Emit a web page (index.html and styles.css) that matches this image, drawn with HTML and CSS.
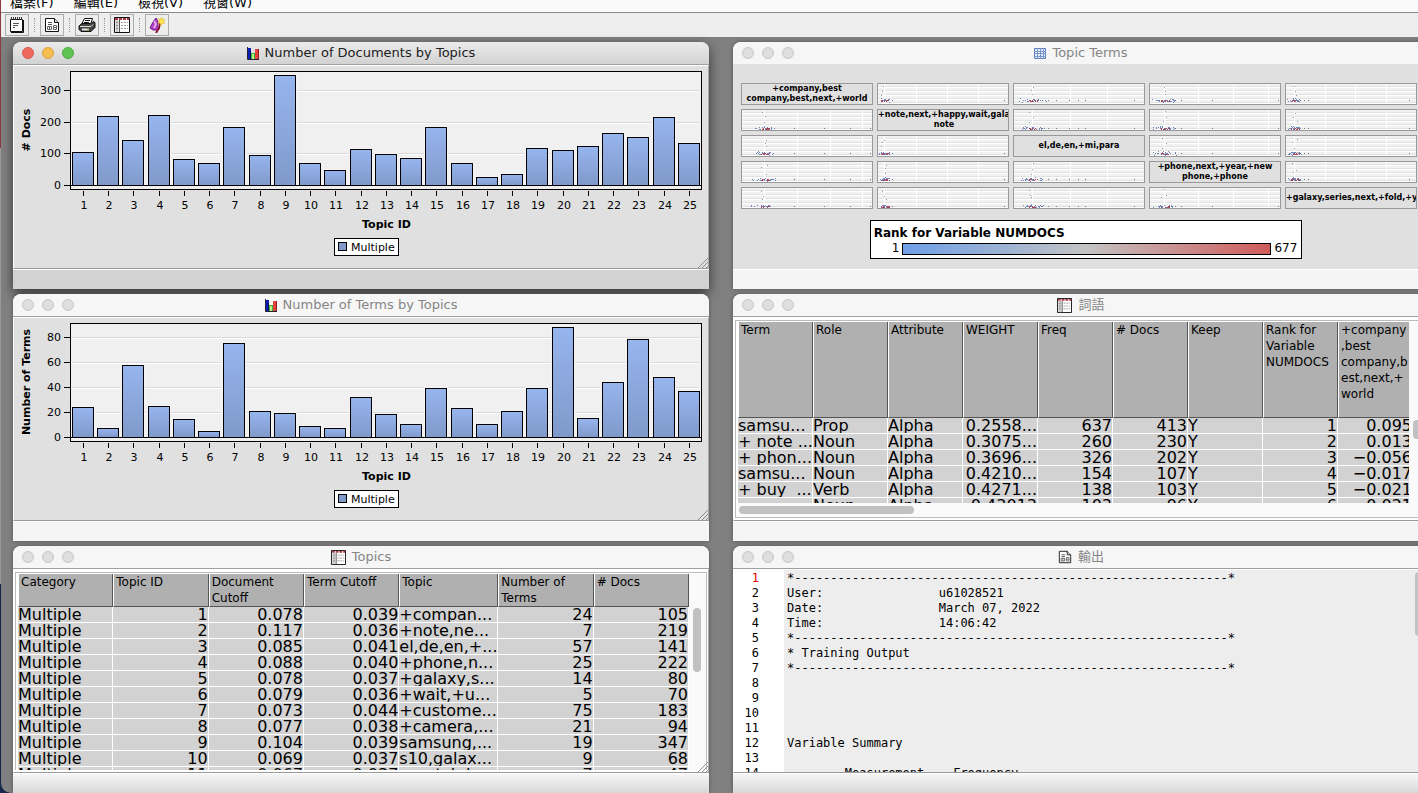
FILE: index.html
```html
<!DOCTYPE html>
<html lang="zh-Hant">
<head>
    <meta charset="UTF-8">
    <meta name="viewport" content="width=device-width, initial-scale=1.0">
    <title>Topic Results</title>
    <link rel="stylesheet" href="styles.css">
</head>
<body>
    <svg class="defs" aria-hidden="true">
        <symbol id="icon-list" viewBox="0 0 16 16">
            <path d="M1.5 2.5h12v12h-12z" fill="#fff" stroke="#111"/>
            <path d="M2.500 0v3M4.500 0v3M6.500 0v3M8.500 0v3M10.500 0v3M12.500 0v3" stroke="#333"/>
            <path d="M4 6.500h6M4 8.500h5M4 10.500h2" stroke="#555"/>
            <path d="M14.500 3v12.500H2" fill="none" stroke="#111"/>
        </symbol>
        <symbol id="icon-report" viewBox="0 0 16 16">
            <path d="M1.500 1.500h9l4 4v9h-13z" fill="#fff" stroke="#111"/>
            <path d="M10.500 1.500v4h4" fill="#ddd" stroke="#111"/>
            <path d="M4 5.500h4M4 7.500h4" stroke="#555"/>
            <path d="M3.500 9.500h4v3h-4zM9.500 8.500h3v4h-3zM5.500 9v4M9 10.500h4" fill="none" stroke="#666"/>
        </symbol>
        <symbol id="icon-print" viewBox="0 0 18 16">
            <path d="M6.500 1.500h8l-2 6h-9z" fill="#fff" stroke="#111"/>
            <path d="M7 3.500h5M6 5.500h5" stroke="#111"/>
            <path d="M2 8l2-1.500h9l2-2 2 1v5l-4 4H3l-2-2V9z" fill="#444" stroke="#111"/>
            <path d="M2 9.500h11l2-2" fill="none" stroke="#ddd"/>
            <path d="M4 12.500h7" stroke="#e8e8e8" stroke-width="2"/>
            <path d="M9 12.500h2" stroke="#b8b83a"/>
        </symbol>
        <symbol id="icon-table" viewBox="0 0 16 16">
            <path d="M.5 .5h15v15H.5z" fill="#fff" stroke="#111"/>
            <path d="M1 2h14" stroke="#b23a48" stroke-width="2" stroke-dasharray="3 1"/>
            <path d="M3 3v12" stroke="#ccc" stroke-width="3"/>
            <path d="M5.500 3v12" stroke="#555"/>
            <path d="M2 5.500h2M2 8.500h2M2 11.500h2" stroke="#888"/>
            <path d="M7 5.500h7M7 8.500h7M7 11.500h7" stroke="#999" stroke-dasharray="2 1"/>
        </symbol>
        <symbol id="icon-wizard" viewBox="0 0 16 16">
            <path d="M7 1L4 5 2 9l-1 2 3 2h5l2-2-3-2 1-4z" fill="#b23fc8" stroke="#6a1b80"/>
            <path d="M5 4l2 3-2 4" fill="none" stroke="#e9a5f2" stroke-width="2"/>
            <path d="M11 5l-1 6-3 5" fill="none" stroke="#8a1538" stroke-width="2"/>
            <path d="M12.500 0l1 3 2.500-1-1.500 2.500L16 6l-3 .5-1 2.500-1-3-2 .5 1.500-2.500L9 1.500l2.500 1z" fill="#ffe94a" stroke="#d8a520" stroke-width=".5"/>
        </symbol>
        <symbol id="icon-bars" viewBox="0 0 12 13">
            <path d="M0 1h4v11H0z" fill="#0b1fb8"/>
            <path d="M3 4h1v8H3z" fill="#06104f"/>
            <path d="M4 6h4v6H4z" fill="#3fae45"/>
            <path d="M5 7h2v5H5z" fill="#b9f27c"/>
            <path d="M8 2h4v10H8z" fill="#e2433c"/>
            <path d="M11 2h1v10h-1z" fill="#8f1d1d"/>
            <path d="M.5 0v12.500H12" fill="none" stroke="#223"/>
        </symbol>
        <symbol id="icon-matrix" viewBox="0 0 12 13">
            <path d="M.5 1.500h11v10H.5z" fill="#e4ecfa" stroke="#5b7ab8"/>
            <path d="M3.500 1v11M6.500 1v11M9.500 1v11M0 4.500h12M0 6.500h12M0 9.500h12" stroke="#7d98cf"/>
        </symbol>
        <symbol id="icon-grip" viewBox="0 0 10 10">
            <path d="M0 10L10 0M4 10l6-6M8 10l2-2" stroke="#8a8a8a"/>
        </symbol>
    </svg>

    <div class="app">
        <nav class="menu">
            <a href="#">檔案(F)</a>
            <a href="#">編輯(E)</a>
            <a href="#">檢視(V)</a>
            <a href="#">視窗(W)</a>
        </nav>

        <div class="toolbar">
            <button aria-label="Properties"><svg><use href="#icon-list"/></svg></button>
            <span class="separator"></span>
            <button aria-label="Report"><svg><use href="#icon-report"/></svg></button>
            <span class="separator"></span>
            <button aria-label="Print"><svg class="wide"><use href="#icon-print"/></svg></button>
            <span class="separator"></span>
            <button aria-label="Table"><svg><use href="#icon-table"/></svg></button>
            <span class="separator"></span>
            <button aria-label="Wizard"><svg><use href="#icon-wizard"/></svg></button>
        </div>

        <main class="desktop">
            <section class="window active">
                <header class="titlebar">
                    <div class="lights">
                        <button class="red" aria-label="Close"></button>
                        <button class="yellow" aria-label="Minimize"></button>
                        <button class="green" aria-label="Zoom"></button>
                    </div>
                    <h2><svg class="icon-small"><use href="#icon-bars"/></svg>Number of Documents by Topics</h2>
                </header>
                <div class="body">
                    <svg class="chart" id="docs-chart"></svg>
                    <svg class="grip"><use href="#icon-grip"/></svg>
                </div>
                <footer class="status"></footer>
            </section>

            <section class="window">
                <header class="titlebar flat">
                    <div class="lights">
                        <button aria-label="Close"></button>
                        <button aria-label="Minimize"></button>
                        <button aria-label="Zoom"></button>
                    </div>
                    <h2><svg class="icon-small"><use href="#icon-matrix"/></svg>Topic Terms</h2>
                </header>
                <div class="body flat matrix-body">
                    <div class="matrix" id="matrix"></div>
                    <div class="rank">
                        <h3>Rank for Variable NUMDOCS</h3>
                        <div class="rank-scale">
                            <span>1</span>
                            <div class="rank-bar"></div>
                            <span>677</span>
                        </div>
                    </div>
                </div>
                <footer class="status"></footer>
            </section>

            <section class="window">
                <header class="titlebar">
                    <div class="lights">
                        <button aria-label="Close"></button>
                        <button aria-label="Minimize"></button>
                        <button aria-label="Zoom"></button>
                    </div>
                    <h2><svg class="icon-small"><use href="#icon-bars"/></svg>Number of Terms by Topics</h2>
                </header>
                <div class="body">
                    <svg class="chart" id="terms-chart"></svg>
                    <svg class="grip"><use href="#icon-grip"/></svg>
                </div>
                <footer class="status"></footer>
            </section>

            <section class="window">
                <header class="titlebar">
                    <div class="lights">
                        <button aria-label="Close"></button>
                        <button aria-label="Minimize"></button>
                        <button aria-label="Zoom"></button>
                    </div>
                    <h2><svg><use href="#icon-table"/></svg>詞語</h2>
                </header>
                <div class="body table-body">
                    <div class="scroll-row">
                        <div class="table-view">
                            <table class="terms-table">
                                <thead>
                                    <tr>
                                        <th>Term</th>
                                        <th>Role</th>
                                        <th>Attribute</th>
                                        <th>WEIGHT</th>
                                        <th>Freq</th>
                                        <th># Docs</th>
                                        <th>Keep</th>
                                        <th>Rank for Variable NUMDOCS</th>
                                        <th>+company<br>,best<br>company,b<br>est,next,+<br>world</th>
                                    </tr>
                                </thead>
                                <tbody id="terms-rows"></tbody>
                            </table>
                        </div>
                        <div class="track terms-track"><div class="thumb"></div></div>
                    </div>
                    <div class="track-bottom"><div class="thumb"></div></div>
                </div>
                <footer class="status"></footer>
            </section>

            <section class="window">
                <header class="titlebar">
                    <div class="lights">
                        <button aria-label="Close"></button>
                        <button aria-label="Minimize"></button>
                        <button aria-label="Zoom"></button>
                    </div>
                    <h2><svg><use href="#icon-table"/></svg>Topics</h2>
                </header>
                <div class="body table-body">
                    <div class="scroll-row">
                        <div class="table-view">
                            <table class="topics-table">
                                <thead>
                                    <tr>
                                        <th>Category</th>
                                        <th>Topic ID</th>
                                        <th>Document Cutoff</th>
                                        <th>Term Cutoff</th>
                                        <th class="topic">Topic</th>
                                        <th>Number of Terms</th>
                                        <th># Docs</th>
                                    </tr>
                                </thead>
                                <tbody id="topics-rows"></tbody>
                            </table>
                        </div>
                        <div class="track topics-track"><div class="thumb"></div></div>
                    </div>
                    <svg class="grip"><use href="#icon-grip"/></svg>
                </div>
                <footer class="status shaded"></footer>
            </section>

            <section class="window">
                <header class="titlebar">
                    <div class="lights">
                        <button aria-label="Close"></button>
                        <button aria-label="Minimize"></button>
                        <button aria-label="Zoom"></button>
                    </div>
                    <h2><svg class="icon-medium"><use href="#icon-report"/></svg>輸出</h2>
                </header>
                <div class="body output">
<pre class="line-numbers"><span class="current">1</span>
2
3
4
5
6
7
8
9
10
11
12
13
14</pre>
<pre class="listing">*------------------------------------------------------------*
User:                u61028521
Date:                March 07, 2022
Time:                14:06:42
*------------------------------------------------------------*
* Training Output
*------------------------------------------------------------*




Variable Summary

        Measurement    Frequency</pre>
                    <div class="track output-track"><div class="thumb"></div></div>
                </div>
                <footer class="status shaded"></footer>
            </section>
        </main>
    </div>

    <script src="script.js"></script>
</body>
</html>
```

FILE: styles.css
```css
* {
    box-sizing: border-box;
}
body {
    margin: 0;
    height: 100vh;
    overflow: hidden;
    font-family: "DejaVu Sans", "Noto Sans CJK TC", sans-serif;
    font-size: 13px;
    color: #000;
    background: linear-gradient(#8d3a40 148px, #999 148px, #999 584px, #14284a 584px);
}
h2, h3, pre {
    margin: 0;
    font-weight: normal;
}
button {
    padding: 0;
    font: inherit;
}
.defs {
    display: none;
}
.app {
    display: flex;
    flex-direction: column;
    height: 100vh;
    margin-left: 1px;
    overflow: hidden;
    background: #808080;
    border-bottom-left-radius: 10px;
}

/* menu and toolbar */
.menu {
    display: flex;
    align-items: flex-end;
    gap: 20px;
    height: 13px;
    flex: none;
    padding-left: 9px;
    overflow: hidden;
    background: #fafafa;
    border-bottom: 1px solid #8a8a8a;
}
.menu a {
    color: #000;
    line-height: 18px;
    text-decoration: none;
    white-space: nowrap;
}
.toolbar {
    display: flex;
    align-items: center;
    gap: 5px;
    height: 24px;
    flex: none;
    padding: 0 4px 1px;
    background: #eee;
}
.toolbar button {
    display: flex;
    align-items: center;
    justify-content: center;
    width: 24px;
    height: 22px;
    background: #eee;
    border: 1px solid #a9aeb0;
}
.toolbar svg {
    width: 16px;
    height: 16px;
    flex: none;
}
.toolbar svg.wide {
    width: 18px;
}
.separator {
    width: 1px;
    height: 14px;
    border-left: 1px dotted #999;
}

/* the right column runs a little past the edge */
.desktop {
    display: grid;
    grid-template-columns: 1fr 1fr;
    grid-template-rows: repeat(3, minmax(0, 1fr));
    gap: 5px 24px;
    flex: 1;
    min-height: 0;
    margin-right: -11px;
    padding: 5px 0 0 12px;
}
.window {
    display: flex;
    flex-direction: column;
    min-width: 0;
    min-height: 0;
    background: #f5f5f5;
    border-radius: 8px 8px 0 0;
    box-shadow: 0 0 4px rgba(0, 0, 0, 0.35);
}
.window.active {
    background: #d2d2d2;
    box-shadow: 0 4px 12px rgba(0, 0, 0, 0.6);
}
.titlebar {
    display: grid;
    grid-template-columns: 1fr auto 1fr;
    align-items: center;
    height: 23px;
    flex: none;
    padding: 0 9px;
    background: #f6f6f6;
    border-bottom: 1px solid #a0a0a0;
    border-radius: 8px 8px 0 0;
}
.titlebar.flat {
    border-bottom: 1px solid #e0e0e0;
}
.active .titlebar {
    background: linear-gradient(#ebebeb, #d2d2d2);
}
.lights {
    display: flex;
    gap: 8px;
}
.lights button {
    width: 12px;
    height: 12px;
    background: #dedede;
    border: 1px solid #c6c6c6;
    border-radius: 50%;
}
.lights .red {
    background: #ee6a5f;
    border-color: #d9574d;
}
.lights .yellow {
    background: #f5bd4f;
    border-color: #dca43c;
}
.lights .green {
    background: #5fc454;
    border-color: #4cab41;
}
.titlebar h2 {
    display: flex;
    align-items: center;
    gap: 6px;
    font-size: 13px;
    line-height: 22px;
    color: #858585;
}
.active h2 {
    color: #222;
}
.titlebar h2 svg {
    width: 15px;
    height: 15px;
}
.titlebar h2 svg.icon-small {
    width: 12px;
    height: 13px;
}
.titlebar h2 svg.icon-medium {
    width: 14px;
    height: 14px;
}
.body {
    position: relative;
    display: flex;
    flex: 1;
    min-height: 0;
    background: #e0e0e0;
    border: 1px solid #fff;
    border-right-color: #aaa;
    border-bottom-color: #999;
    overflow: hidden;
}
.body.flat {
    border: none;
}
.status {
    height: 20px;
    flex: none;
    border-top: 1px solid #fff;
}
.status.shaded {
    background: linear-gradient(#f5f5f5, #d8d8d8);
}
.grip {
    position: absolute;
    right: 0;
    bottom: 0;
    width: 10px;
    height: 10px;
}

/* bar charts */
.chart {
    flex: 1;
    min-width: 0;
    height: 100%;
    font-size: 11px;
}
.chart .axis-title {
    font-weight: bold;
}

/* topic terms */
.matrix-body {
    flex-direction: column;
    align-items: center;
    gap: 11px;
    padding: 18px 12px 11px 8px;
}
.matrix {
    display: grid;
    grid-template-columns: repeat(5, 1fr);
    grid-auto-rows: 22px;
    gap: 4px;
    width: 100%;
}
.cell {
    min-width: 0;
    overflow: hidden;
    border: 1px solid #999;
}
.cell svg {
    display: block;
    width: 100%;
    height: 100%;
}
.cell.label {
    display: flex;
    align-items: center;
    justify-content: safe center;
    font-size: 8px;
    font-weight: bold;
    line-height: 10px;
    text-align: center;
    white-space: nowrap;
}
.rank {
    width: 64%;
    margin-left: 14px;
    padding: 4px 4px 2px 3px;
    background: #fff;
    border: 1px solid #000;
}
.rank h3 {
    font-size: 12px;
    font-weight: bold;
    line-height: 16px;
}
.rank-scale {
    display: flex;
    align-items: center;
    gap: 3px;
    padding-left: 18px;
    font-size: 12px;
    line-height: 15px;
}
.rank-bar {
    flex: 1;
    height: 12px;
    border: 1px solid #000;
    background: linear-gradient(to right, #6f9fe8, #c4c4c4, #d05b5b);
}

/* tables */
.table-body {
    flex-direction: column;
    padding: 2px 1px 2px 1px;
    background: #fff;
}
.scroll-row {
    display: flex;
    flex: 1;
    min-height: 0;
    padding: 1px 0 0 2px;
    border: 1px solid #bbb;
    border-width: 1px 1px 0 1px;
}
.table-view {
    flex: 1;
    min-width: 0;
    overflow: hidden;
}
table {
    width: 100%;
    border-collapse: separate;
    border-spacing: 0;
    table-layout: fixed;
}
.terms-table {
    width: 675px;
}
th {
    height: 32px;
    padding: 0 0 0 2px;
    font-size: 12px;
    font-weight: normal;
    line-height: 16px;
    text-align: left;
    vertical-align: top;
    background: #b0b0b0;
    border-left: 1px solid #fff;
    border-right: 1px solid #555;
    border-bottom: 1px solid #555;
}
th.topic {
    width: 99px;
}
.terms-table th {
    height: 96px;
}
td {
    height: 16px;
    padding: 0;
    font-size: 16px;
    line-height: 15px;
    white-space: pre;
    overflow: hidden;
    background: #d2d2d2;
    border-right: 1px solid #fff;
    border-bottom: 1px solid #fff;
}
td.number {
    text-align: right;
}
.track {
    width: 17px;
    flex: none;
    padding-left: 4px;
    background: #fafafa;
}
.thumb {
    width: 8px;
    background: #c1c1c1;
    border-radius: 4px;
}
.topics-track {
    padding-top: 34px;
}
.topics-track .thumb {
    height: 64px;
}
.terms-track {
    padding-top: 98px;
}
.terms-track .thumb {
    height: 19px;
}
.track-bottom {
    height: 15px;
    flex: none;
    padding: 3px 0 0 3px;
    background: #fafafa;
    border: 1px solid #bbb;
    border-top: none;
}
.track-bottom .thumb {
    width: 175px;
    height: 8px;
}

/* output listing */
.output {
    background: #ededed;
    border-color: #fff #fff #999;
}
.output pre {
    font-family: "DejaVu Sans Mono", monospace;
    font-size: 12px;
    line-height: 15px;
    padding-top: 1px;
}
.line-numbers {
    width: 50px;
    flex: none;
    padding-right: 25px;
    text-align: right;
    background: #fff;
}
.line-numbers .current {
    color: #e00;
}
.listing {
    flex: 1;
    min-width: 0;
    padding-left: 3px;
}
.output-track {
    padding-top: 2px;
    background: none;
}
.output-track .thumb {
    height: 64px;
}
```

FILE: script.js
```javascript
const SVG_NS = "http://www.w3.org/2000/svg";

function add(parent, name, attrs, text) {
    const node = document.createElementNS(SVG_NS, name);
    for (const key in attrs) {
        node.setAttribute(key, attrs[key]);
    }
    if (text !== undefined) {
        node.textContent = text;
    }
    parent.appendChild(node);
    return node;
}

function drawChart(id, values, step, max, yTitle) {
    const svg = document.getElementById(id);
    const width = svg.clientWidth;
    const height = svg.clientHeight;
    const left = 56;
    const right = width - 7;
    const top = 5;
    const bottom = height - 79;
    const zero = bottom - 4;
    const scale = (zero - top - 1) / max;

    const gradient = add(add(svg, "defs", {}), "linearGradient", { id: id + "-fill", x2: 0, y2: 1 });
    add(gradient, "stop", { offset: 0, "stop-color": "#97b5ee" });
    add(gradient, "stop", { offset: 1, "stop-color": "#7f99ca" });

    add(svg, "rect", { x: left + 0.5, y: top + 0.5, width: right - left, height: bottom - top, fill: "#f0f0f0", stroke: "#000" });

    for (let value = 0; value < max; value += step) {
        const y = Math.round(zero - value * scale);
        if (value > 0) {
            add(svg, "rect", { x: left + 2, y: y, width: right - left - 4, height: 1, fill: "#dadada" });
            add(svg, "rect", { x: left + 2, y: y + 1, width: right - left - 4, height: 1, fill: "#fff" });
        }
        add(svg, "rect", { x: left - 6, y: y, width: 6, height: 1 });
        add(svg, "text", { x: left - 9, y: y + 4, "text-anchor": "end" }, value);
    }

    const slot = (right - left) / values.length;
    values.forEach((value, index) => {
        const x = Math.round(left + 2 + index * slot);
        const barHeight = Math.round(value * scale);
        add(svg, "rect", { x: x - 1, y: zero - barHeight - 1, width: 24, height: barHeight + 1, fill: "#f4f4f4" });
        add(svg, "rect", { x: x + 0.5, y: zero - barHeight + 0.5, width: 21, height: barHeight, fill: `url(#${id}-fill)`, stroke: "#000" });
        add(svg, "rect", { x: x + 11, y: bottom + 2, width: 1, height: 5 });
        add(svg, "text", { x: x + 12, y: bottom + 20, "text-anchor": "middle" }, index + 1);
    });
    add(svg, "rect", { x: left, y: zero, width: right - left, height: 1 });

    const middle = (top + bottom) / 2;
    add(svg, "text", { class: "axis-title", x: (left + right) / 2 + 1, y: bottom + 39, "text-anchor": "middle" }, "Topic ID");
    add(svg, "text", { class: "axis-title", transform: `translate(16 ${middle}) rotate(-90)`, "text-anchor": "middle" }, yTitle);

    // legend
    const legendX = Math.round(width / 2) - 27;
    add(svg, "rect", { x: legendX + 0.5, y: bottom + 49.5, width: 64, height: 17, fill: "#fff", stroke: "#000" });
    add(svg, "rect", { x: legendX + 4.5, y: bottom + 53.5, width: 8, height: 8, fill: "#8299cc", stroke: "#000" });
    add(svg, "text", { x: legendX + 17, y: bottom + 62 }, "Multiple");
}

const docs = [105, 219, 141, 222, 82, 70, 183, 94, 347, 70, 47, 114, 98, 86, 184, 70, 25, 34, 118, 111, 124, 164, 152, 216, 133];
const terms = [24, 7, 57, 25, 14, 5, 75, 21, 19, 9, 7, 32, 18, 10, 39, 23, 10, 21, 39, 88, 15, 44, 78, 48, 37];
drawChart("docs-chart", docs, 100, 358, "# Docs");
drawChart("terms-chart", terms, 20, 90, "Number of Terms");

// scatter matrix: one entry per topic, positions on a 130 x 20 cell
const topics = [
    { label: "+company,best<br>company,best,next,+world", center: 22, base: 16, grid: [22, 55, 88, 120], far: [52, 82, 108, 128] },
    { label: "+note,next,+happy,wait,gala<br>note", center: 6, base: 18, grid: [6, 38, 69, 100], far: [14, 126] },
    { label: "el,de,en,+mi,para", center: 18, base: 17, grid: [18, 56, 93], far: [28, 34, 42, 55, 64, 71, 120] },
    { label: "+phone,next,+year,+new<br>phone,+phone", center: 14, base: 17, grid: [14, 48, 83, 118], far: [25, 31, 62, 128] },
    { label: "+galaxy,series,next,+fold,+ye", center: 8, base: 18, grid: [8, 39, 69, 100], far: [18, 22, 123] }
];

let seed = 7;
function random() {
    seed = (seed * 16807) % 2147483647;
    return seed / 2147483647;
}

function drawScatter(cell, xTopic, yTopic) {
    const svg = add(cell, "svg", { viewBox: "0 0 130 20", preserveAspectRatio: "none" });
    for (let y = 0; y < 20; y += 4) {
        add(svg, "rect", { x: 0, y: y, width: 130, height: 2, fill: "#f2f2f2" });
        add(svg, "rect", { x: 0, y: y + 2, width: 130, height: 1, fill: "#e2e2e2" });
        add(svg, "rect", { x: 0, y: y + 3, width: 130, height: 1, fill: "#fff" });
    }
    xTopic.grid.forEach(x => add(svg, "rect", { x: x, y: 0, width: 1, height: 20, fill: "#fff" }));

    const dot = (x, y, color) => add(svg, "rect", { x: Math.round(x), y: Math.round(y), width: 1, height: 1, fill: color });
    for (let i = 0; i < 26; i++) {
        const spread = (random() + random() - 1) * Math.min(14, xTopic.center);
        const y = yTopic.base + (random() + random() - 1) * 2;
        dot(xTopic.center + spread, y, "#7088bd");
    }
    for (let i = 0; i < 12; i++) {
        dot(xTopic.center + 1 + (random() - 0.5) * 9, yTopic.base + random(), "#a5485a");
    }
    for (let i = 0; i < 3; i++) {
        dot(xTopic.center + (random() - 0.5) * 6, 1 + i * 4 + random() * 3, "#8899bb");
    }
    xTopic.far.forEach(x => dot(x, yTopic.base, "#6c7698"));
}

const matrix = document.getElementById("matrix");
topics.forEach((yTopic, row) => {
    topics.forEach((xTopic, column) => {
        const cell = document.createElement("div");
        cell.className = "cell";
        if (row === column) {
            cell.classList.add("label");
            cell.innerHTML = `<span>${xTopic.label}</span>`;
        } else {
            drawScatter(cell, xTopic, yTopic);
        }
        matrix.appendChild(cell);
    });
});

function fillTable(id, rows, textColumns) {
    const tbody = document.getElementById(id);
    rows.forEach(values => {
        const row = document.createElement("tr");
        values.forEach((value, index) => {
            const cell = row.insertCell();
            cell.textContent = value;
            if (!textColumns.includes(index)) {
                cell.className = "number";
            }
        });
        tbody.appendChild(row);
    });
}

fillTable("terms-rows", [
    ["samsu...", "Prop", "Alpha", "0.2558...", 637, 413, "Y", 1, "0.095"],
    ["+ note ...", "Noun", "Alpha", "0.3075...", 260, 230, "Y", 2, "0.013"],
    ["+ phon...", "Noun", "Alpha", "0.3696...", 326, 202, "Y", 3, "−0.056"],
    ["samsu...", "Noun", "Alpha", "0.4210...", 154, 107, "Y", 4, "−0.017"],
    ["+ buy  ...", "Verb", "Alpha", "0.4271...", 138, 103, "Y", 5, "−0.021"],
    ["", "Noun", "Alpha", "0.43013", 103, 96, "Y", 6, "0.021"]
], [0, 1, 2, 6]);

fillTable("topics-rows", [
    ["Multiple", 1, "0.078", "0.039", "+compan...", 24, 105],
    ["Multiple", 2, "0.117", "0.036", "+note,ne...", 7, 219],
    ["Multiple", 3, "0.085", "0.041", "el,de,en,+...", 57, 141],
    ["Multiple", 4, "0.088", "0.040", "+phone,n...", 25, 222],
    ["Multiple", 5, "0.078", "0.037", "+galaxy,s...", 14, 80],
    ["Multiple", 6, "0.079", "0.036", "+wait,+u...", 5, 70],
    ["Multiple", 7, "0.073", "0.044", "+custome...", 75, 183],
    ["Multiple", 8, "0.077", "0.038", "+camera,...", 21, 94],
    ["Multiple", 9, "0.104", "0.039", "samsung,...", 19, 347],
    ["Multiple", 10, "0.069", "0.037", "s10,galax...", 9, 68],
    ["Multiple", 11, "0.067", "0.037", "+watch,l...", 7, 47]
], [0, 4]);
```
